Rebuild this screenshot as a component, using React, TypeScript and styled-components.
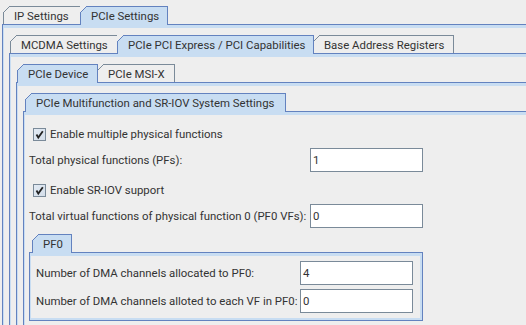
import styled, { createGlobalStyle } from "styled-components";

const colors = {
  bg: "#eeeeee",
  selected: "#c8ddf2",
  line: "#6382bf",
  gray: "#7a8a99",
  text: "#333333",
};

const GlobalStyle = createGlobalStyle`
  html, body {
    margin: 0;
    padding: 0;
    overflow: hidden;
    background: ${colors.bg};
  }
  body {
    font-family: Roboto, "Liberation Sans", sans-serif;
    font-size: 11.4px;
    color: ${colors.text};
  }
`;

const Root = styled.div`
  width: 600px;
  height: 325px;
  padding: 6px 0 0 2px;
  box-sizing: border-box;
`;

const Pane = styled.div<{ $mt?: number }>`
  display: flex;
  flex-direction: column;
  margin-top: ${(p) => p.$mt || 0}px;
  grid-column: 1 / -1;
`;

const TabRow = styled.div<{ $indent: number }>`
  display: flex;
  align-items: flex-end;
  height: 18px;
  padding-left: ${(p) => p.$indent}px;
`;

const Tab = styled.div<{ $selected?: boolean; $width: number }>`
  position: relative;
  box-sizing: border-box;
  width: ${(p) => p.$width}px;
  height: ${(p) => (p.$selected ? 19 : 18)}px;
  margin-bottom: ${(p) => (p.$selected ? -1 : 0)}px;
  padding: 0 0 ${(p) => (p.$selected ? 1 : 0)}px 10px;
  z-index: ${(p) => (p.$selected ? 1 : 0)};
  border: 1px solid ${(p) => (p.$selected ? colors.line : colors.gray)};
  border-bottom: none;
  background: ${(p) => (p.$selected ? colors.selected : colors.bg)};
  display: flex;
  align-items: center;
  white-space: nowrap;

  & + & {
    margin-left: -1px;
  }

  &::before {
    content: "";
    position: absolute;
    top: -1px;
    left: -1px;
    width: 7px;
    height: 7px;
    background: linear-gradient(
      to bottom right,
      ${colors.bg} 0 calc(50% - 0.6px),
      ${(p) => (p.$selected ? colors.line : colors.gray)} calc(50% - 0.6px) calc(50% + 0.6px),
      transparent calc(50% + 0.6px)
    );
  }
`;

const Content = styled.div<{ $pad: string }>`
  border: 1px solid ${colors.line};
  box-shadow: inset 1px 3px 0 ${colors.selected}, inset -2px -2px 0 ${colors.selected};
  padding: ${(p) => p.$pad};
  flex: 1;
`;

const Form = styled.div<{ $labelWidth: number }>`
  display: grid;
  grid-template-columns: ${(p) => p.$labelWidth}px 113px;
  row-gap: 4px;
  align-items: center;
`;

const CheckRow = styled.label<{ $mt?: number }>`
  grid-column: 1 / -1;
  display: flex;
  align-items: center;
  gap: 4px;
  height: 20px;
  padding-left: 4px;
  margin-top: ${(p) => p.$mt || 0}px;
`;

const Label = styled.span`
  white-space: nowrap;
`;

const Field = styled.div`
  box-sizing: border-box;
  height: 24px;
  border: 1px solid ${colors.gray};
  background: #ffffff;
  padding-left: 2px;
  display: flex;
  align-items: center;
`;

function CheckBox() {
  return (
    <svg width="13" height="13" viewBox="0 0 13 13">
      <defs>
        <linearGradient id="cb" x1="0" y1="0" x2="1" y2="1">
          <stop offset="0" stopColor="#e4ecf5" />
          <stop offset="1" stopColor="#d2dce8" />
        </linearGradient>
      </defs>
      <rect x="0.5" y="0.5" width="12" height="12" fill="url(#cb)" stroke="#7a8a99" />
      <path d="M3.5 6.5 L5.3 9.6 L9.8 3.2" fill="none" stroke="#222" strokeWidth="1.8" />
    </svg>
  );
}

export default function App() {
  return (
    <>
      <GlobalStyle />
      <Root>
        <Pane>
          <TabRow $indent={1}>
            <Tab $width={78}>IP Settings</Tab>
            <Tab $width={88} $selected>PCIe Settings</Tab>
          </TabRow>
          <Content $pad="10px 5px 0 6px">
            <Pane>
              <TabRow $indent={1}>
                <Tab $width={108}>MCDMA Settings</Tab>
                <Tab $width={197} $selected>PCIe PCI Express / PCI Capabilities</Tab>
                <Tab $width={141}>Base Address Registers</Tab>
              </TabRow>
              <Content $pad="10px 5px 0 6px">
                <Pane>
                  <TabRow $indent={1}>
                    <Tab $width={81} $selected>PCIe Device</Tab>
                    <Tab $width={78}>PCIe MSI-X</Tab>
                  </TabRow>
                  <Content $pad="10px 5px 0 6px">
                    <Pane>
                      <TabRow $indent={2}>
                        <Tab $width={261} $selected>PCIe Multifunction and SR-IOV System Settings</Tab>
                      </TabRow>
                      <Content $pad="12px 5px 6px 5px">
                        <Form $labelWidth={281}>
                          <CheckRow>
                            <CheckBox />
                            <Label>Enable multiple physical functions</Label>
                          </CheckRow>
                          <Label>Total physical functions (PFs):</Label>
                          <Field>1</Field>
                          <CheckRow $mt={4}>
                            <CheckBox />
                            <Label>Enable SR-IOV support</Label>
                          </CheckRow>
                          <Label>Total virtual functions of physical function 0 (PF0 VFs):</Label>
                          <Field>0</Field>
                          <Pane $mt={2}>
                            <TabRow $indent={3}>
                              <Tab $width={40} $selected>PF0</Tab>
                            </TabRow>
                            <Content $pad="8px 5px 7px 6px">
                              <Form $labelWidth={264}>
                                <Label>Number of DMA channels allocated to PF0:</Label>
                                <Field>4</Field>
                                <Label>Number of DMA channels alloted to each VF in PF0:</Label>
                                <Field>0</Field>
                              </Form>
                            </Content>
                          </Pane>
                        </Form>
                      </Content>
                    </Pane>
                  </Content>
                </Pane>
              </Content>
            </Pane>
          </Content>
        </Pane>
      </Root>
    </>
  );
}
